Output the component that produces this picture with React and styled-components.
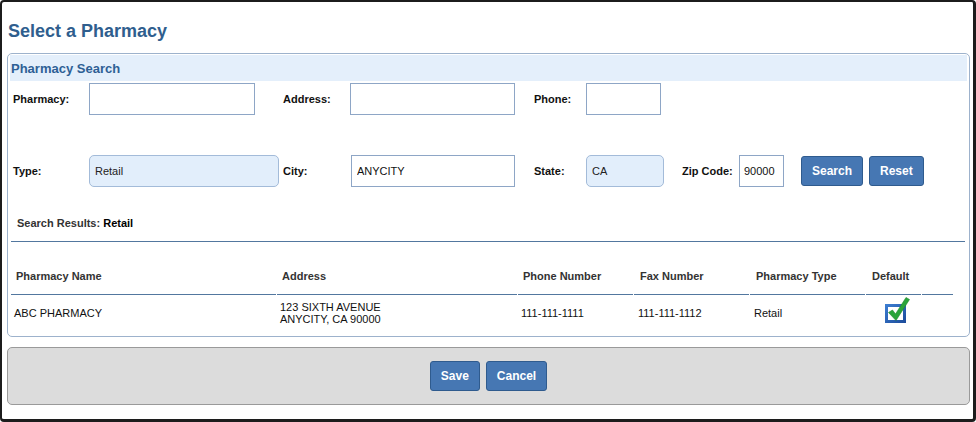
import React from "react";
import styled, { createGlobalStyle } from "styled-components";

const Global = createGlobalStyle`
  html, body { margin: 0; padding: 0; background: #ffffff; }
  body { font-family: "Liberation Sans", Arial, sans-serif; }
  * { box-sizing: border-box; }
`;

const Frame = styled.div`
  width: 976px;
  height: 422px;
  border-style: solid;
  border-color: #1c1c1c;
  border-width: 2px 3px 3px 2px;
  border-radius: 4px;
  background: #ffffff;
  padding: 19px 3px 0 5px;
`;

const Title = styled.h1`
  margin: 0 0 11px 1px;
  font-size: 18px;
  line-height: 21px;
  font-weight: bold;
  color: #2f5e8e;
`;

const Panel = styled.section`
  border: 1px solid #9db2cc;
  border-radius: 5px;
  padding: 0 0 5px 0;
  height: 284px;
`;

const PanelHeader = styled.div`
  margin: 1px 2px 0 2px;
  height: 26px;
  background: #e4effb;
  display: flex;
  align-items: center;
  padding-left: 1px;
  font-size: 13px;
  font-weight: bold;
  color: #2e6095;
`;

const Form = styled.div`
  margin-top: 2px;
  padding-left: 5px;
  display: grid;
  grid-template-columns: 76px 194px 67px 184px 52px 96px 57px 62px auto;
  grid-template-rows: 32px 32px;
  row-gap: 40px;
  align-items: center;
`;

const Label = styled.label`
  font-size: 11px;
  font-weight: bold;
  color: #111;
`;

const TextInput = styled.input`
  width: ${(p) => p.$w}px;
  height: ${(p) => p.$h || 32}px;
  margin-left: ${(p) => p.$ml || 0}px;
  border: 1px solid #8ea6c6;
  border-radius: 0;
  background: #fff;
  padding: 0 5px;
  font-family: "Liberation Sans", Arial, sans-serif;
  font-size: 11px;
  color: #111;
  outline: none;
`;

const Select = styled.select`
  width: ${(p) => p.$w}px;
  height: 32px;
  border: 1px solid #a3bbd9;
  border-radius: 5px;
  background: #e2eefb;
  padding: 0 5px;
  font-family: "Liberation Sans", Arial, sans-serif;
  font-size: 11px;
  color: #222;
  appearance: none;
  -webkit-appearance: none;
  outline: none;
`;

const ButtonGroup = styled.div`
  display: flex;
  gap: 6px;
  align-self: center;
`;

const Button = styled.button`
  height: 30px;
  padding: 0 ${(p) => p.$px || 10}px;
  background: #4677b3;
  border: 1px solid #2f5b8e;
  border-radius: 3px;
  color: #fff;
  font-family: "Liberation Sans", Arial, sans-serif;
  font-size: 12px;
  font-weight: bold;
  cursor: pointer;
`;

const Results = styled.div`
  margin: 0 4px 0 3px;
`;

const ResultsTitle = styled.div`
  height: 55px;
  border-bottom: 1px solid #52779f;
  display: flex;
  align-items: flex-end;
  padding: 0 0 11px 6px;
  font-size: 11px;
  line-height: 13px;
  font-weight: bold;
  color: #333;
  span { color: #000; }
`;

const Table = styled.div`
  display: grid;
  grid-template-columns: 265px 240px 115px 115px 115px 55px 31px;
  column-gap: 1px;
  width: 942px;
`;

const HeadCell = styled.div`
  height: 53px;
  border-bottom: 1px solid #52779f;
  display: flex;
  align-items: flex-end;
  padding: 0 0 11px ${(p) => p.$pl || 5}px;
  font-size: 11px;
  line-height: 13px;
  font-weight: bold;
  color: #333;
`;

const Cell = styled.div`
  padding: 6px 0 6px ${(p) => p.$pl || 3}px;
  display: flex;
  align-items: center;
  justify-content: ${(p) => (p.$center ? "center" : "flex-start")};
  font-size: 11px;
  line-height: 12px;
  color: #111;
`;

const Footer = styled.div`
  margin-top: 10px;
  height: 58px;
  background: #dcdcdc;
  border: 1px solid #9a9a9a;
  border-radius: 5px;
  display: flex;
  justify-content: center;
  align-items: center;
  gap: 6px;
`;

const CheckIcon = () => (
  <svg width="25" height="26" viewBox="0 0 25 26" style={{ marginLeft: 4, marginTop: -6 }}>
    <defs>
      <linearGradient id="boxg" x1="0" y1="0" x2="1" y2="1">
        <stop offset="0" stopColor="#3d7fd3" />
        <stop offset="1" stopColor="#1b4a9a" />
      </linearGradient>
    </defs>
    <rect x="0" y="7" width="21" height="19" fill="url(#boxg)" />
    <rect x="3" y="10" width="15" height="13" fill="#ffffff" />
    <path
      d="M3.5 15.5 L7.5 13 L10.5 17 L21 0.5 L24.5 2.5 L11 23.5 Z"
      fill="#2aa43a"
      stroke="#1f8a2d"
      strokeWidth="0.6"
      strokeLinejoin="round"
    />
  </svg>
);

export default function App() {
  return (
    <>
      <Global />
      <Frame>
        <Title>Select a Pharmacy</Title>
        <Panel>
          <PanelHeader>Pharmacy Search</PanelHeader>
          <Form>
            <Label>Pharmacy:</Label>
            <TextInput $w={166} />
            <Label>Address:</Label>
            <TextInput $w={165} />
            <Label>Phone:</Label>
            <TextInput $w={75} />
            <span />
            <span />
            <span />

            <Label>Type:</Label>
            <Select $w={190} defaultValue="Retail">
              <option>Retail</option>
              <option>Mail Order</option>
            </Select>
            <Label>City:</Label>
            <TextInput $w={164} $ml={1} defaultValue="ANYCITY" />
            <Label>State:</Label>
            <Select $w={78} defaultValue="CA">
              <option>CA</option>
            </Select>
            <Label>Zip Code:</Label>
            <TextInput $w={45} $h={32} defaultValue="90000" style={{ padding: "0 4px" }} />
            <ButtonGroup>
              <Button>Search</Button>
              <Button>Reset</Button>
            </ButtonGroup>
          </Form>
          <Results>
            <ResultsTitle>
              Search Results:&nbsp;<span>Retail</span>
            </ResultsTitle>
            <Table>
              <HeadCell>Pharmacy Name</HeadCell>
              <HeadCell>Address</HeadCell>
              <HeadCell>Phone Number</HeadCell>
              <HeadCell $pl={6}>Fax Number</HeadCell>
              <HeadCell $pl={6}>Pharmacy Type</HeadCell>
              <HeadCell $pl={6}>Default</HeadCell>
              <HeadCell />

              <Cell>ABC PHARMACY</Cell>
              <Cell>
                123 SIXTH AVENUE
                <br />
                ANYCITY, CA 90000
              </Cell>
              <Cell>111-111-1111</Cell>
              <Cell $pl={4}>111-111-1112</Cell>
              <Cell $pl={4}>Retail</Cell>
              <Cell $center $pl={0}>
                <CheckIcon />
              </Cell>
              <Cell />
            </Table>
          </Results>
        </Panel>
        <Footer>
          <Button>Save</Button>
          <Button>Cancel</Button>
        </Footer>
      </Frame>
    </>
  );
}
